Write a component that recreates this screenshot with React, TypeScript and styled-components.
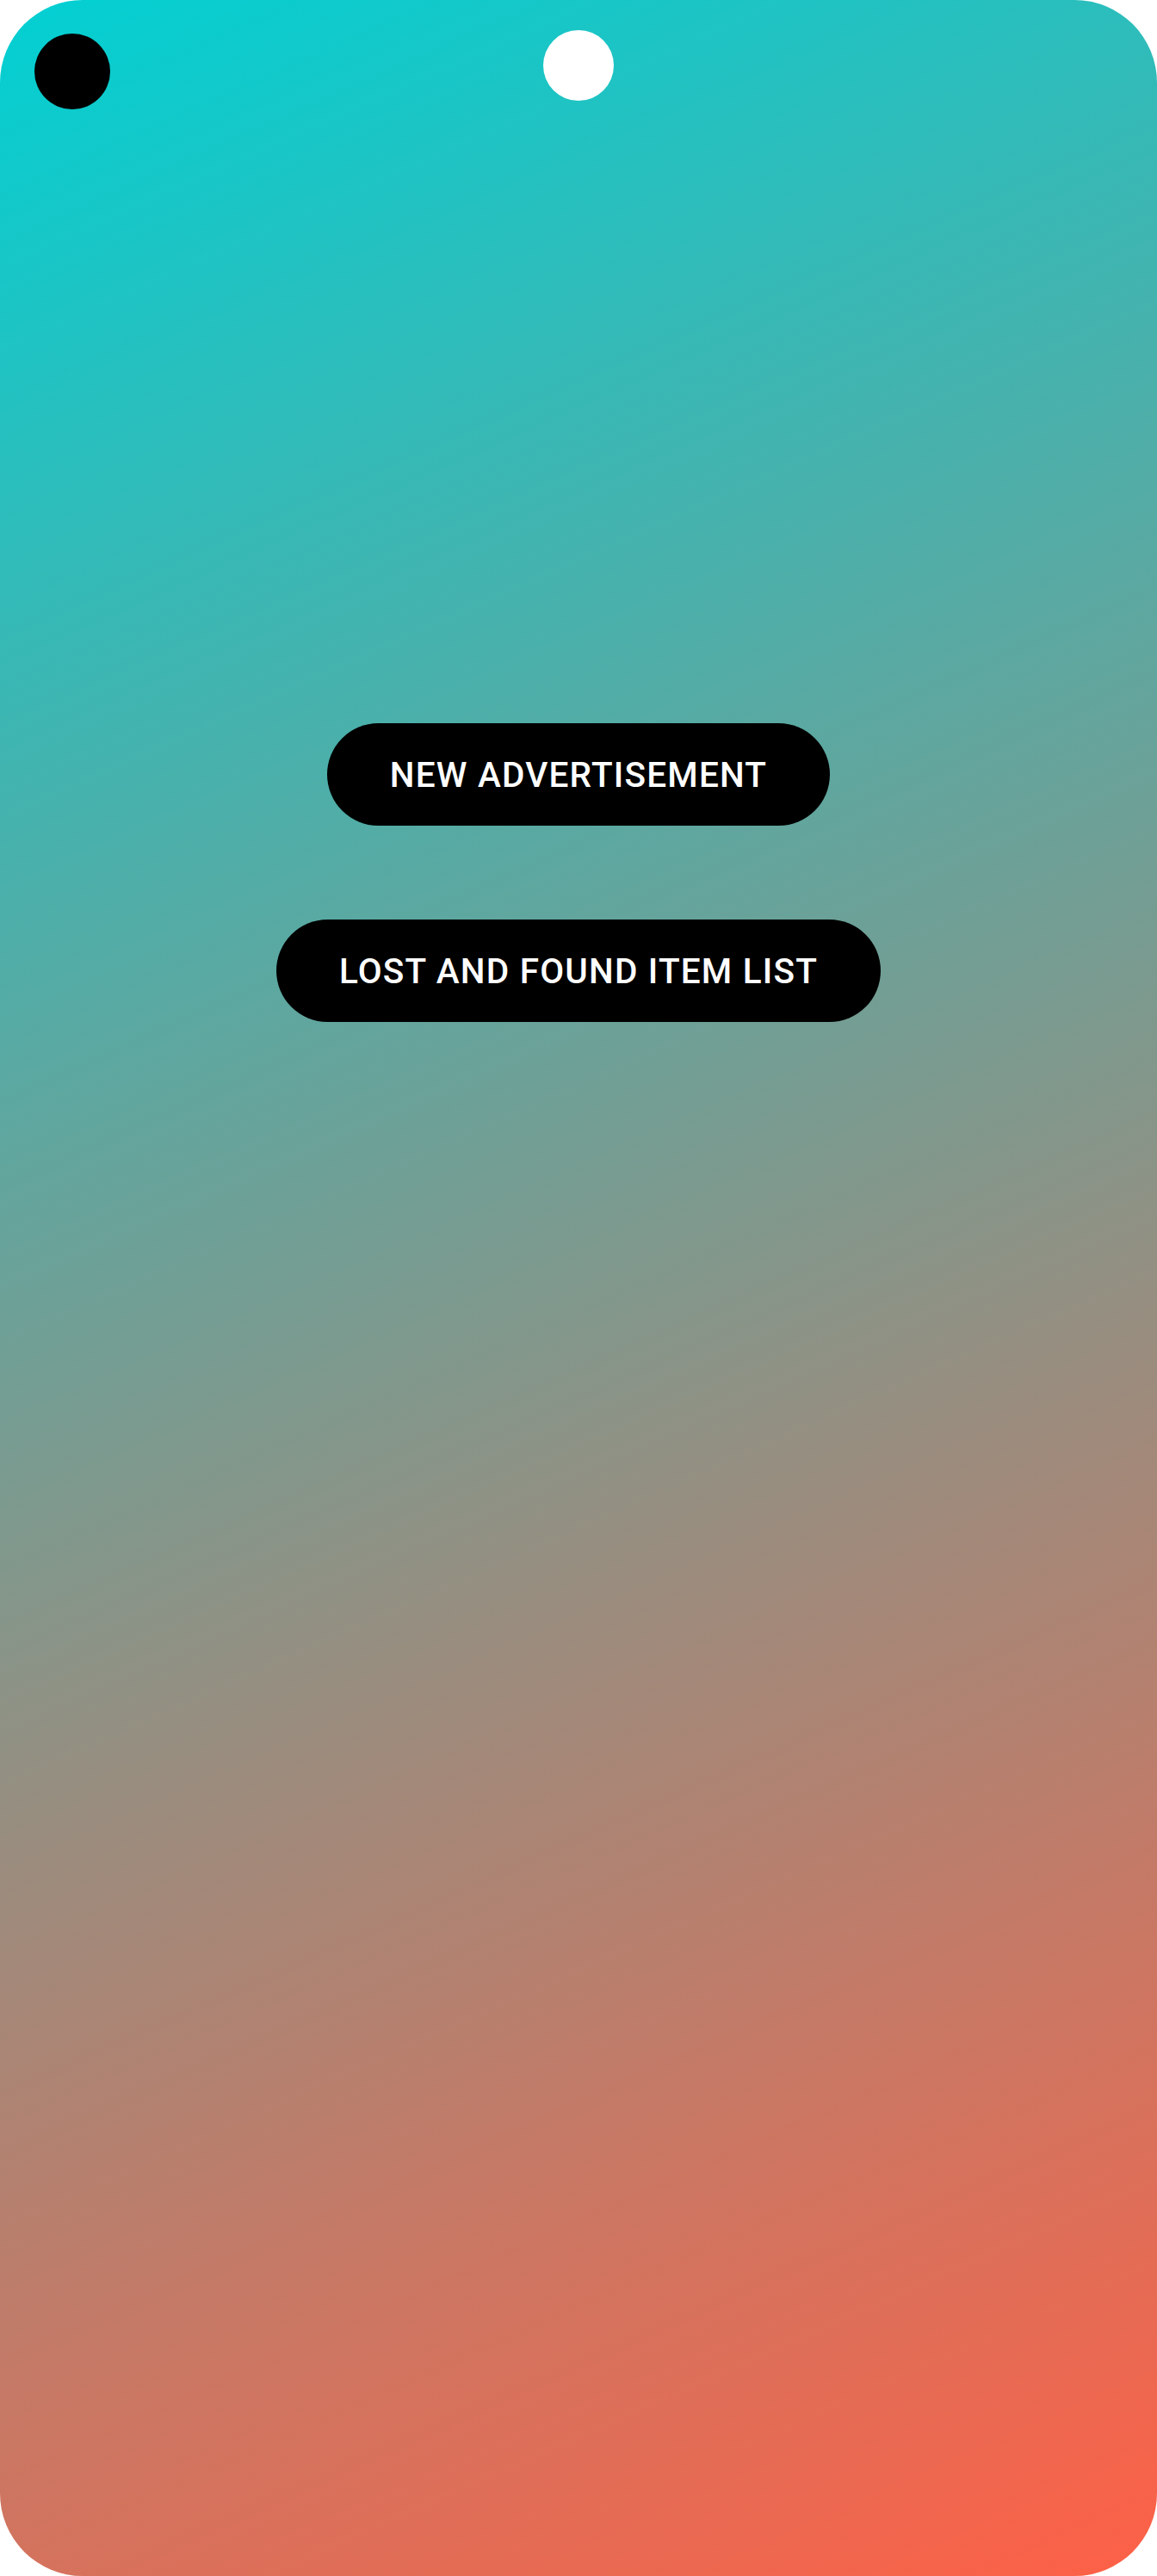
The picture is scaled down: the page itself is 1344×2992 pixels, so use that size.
import React from "react";
import styled, { createGlobalStyle } from "styled-components";

const GlobalStyle = createGlobalStyle`
  html, body {
    margin: 0;
    padding: 0;
    background: #ffffff;
  }
  * {
    box-sizing: border-box;
  }
`;

const Screen = styled.div`
  position: relative;
  width: 1344px;
  height: 2992px;
  border-radius: 96px;
  overflow: hidden;
  background: linear-gradient(156deg, #02d0d3 0%, #fe6046 100%);
  display: flex;
  flex-direction: column;
  align-items: center;
  padding-top: 840px;
  gap: 109px;
`;

// camera dots on top of the screen
const Dot = styled.div<{ $color: string; $size: number; $left: number; $top: number }>`
  position: absolute;
  left: ${({ $left }) => $left}px;
  top: ${({ $top }) => $top}px;
  width: ${({ $size }) => $size}px;
  height: ${({ $size }) => $size}px;
  border-radius: 50%;
  background: ${({ $color }) => $color};
`;

const PillButton = styled.button`
  height: 119px;
  padding: 0 73px;
  border: none;
  border-radius: 60px;
  background: #000000;
  color: #ffffff;
  font-family: Roboto, "Liberation Sans", sans-serif;
  font-weight: 500;
  font-size: 40.5px;
  letter-spacing: 1.2px;
  text-transform: uppercase;
  cursor: pointer;
`;

const App = () => {
  return (
    <>
      <GlobalStyle />
      <Screen>
        <Dot $color="#000000" $size={88} $left={40} $top={39} />
        <Dot $color="#ffffff" $size={82} $left={631} $top={35} />
        <PillButton>New Advertisement</PillButton>
        <PillButton>Lost and Found Item List</PillButton>
      </Screen>
    </>
  );
};

export default App;
